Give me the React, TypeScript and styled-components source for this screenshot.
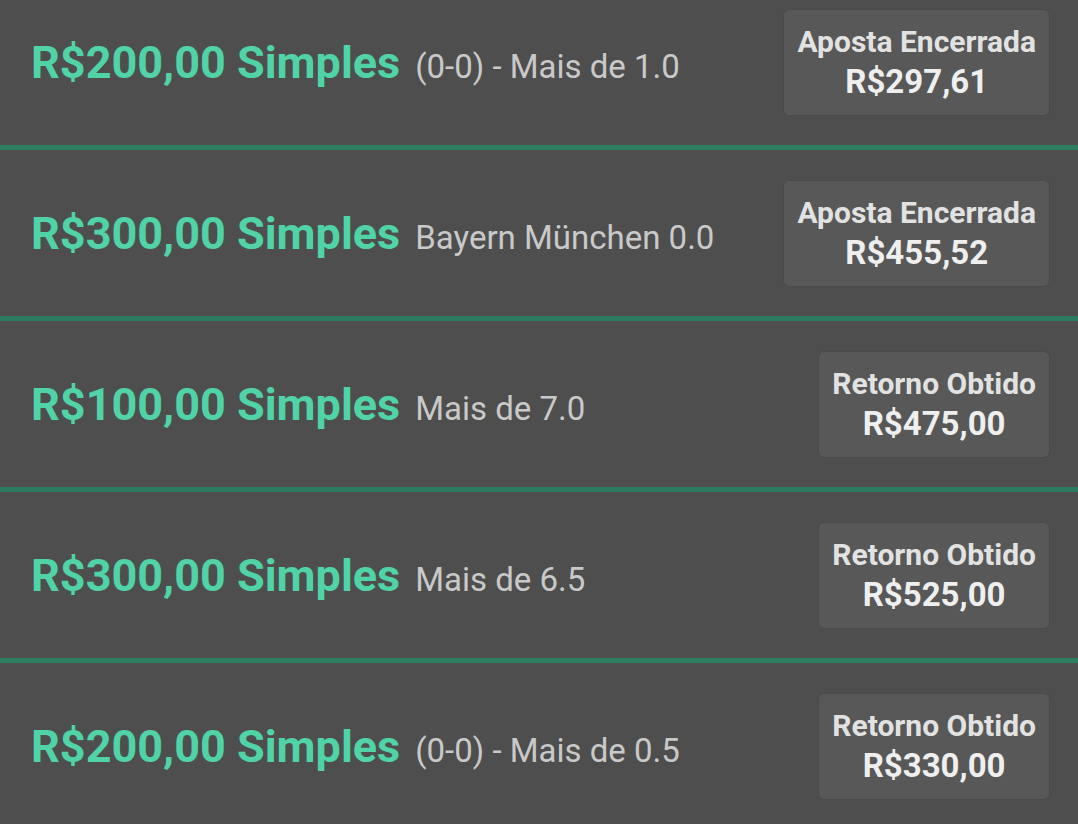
import React from "react";
import styled, { createGlobalStyle } from "styled-components";

const Global = createGlobalStyle`
  html, body { margin: 0; padding: 0; background: #4e4e4e; }
  body { font-family: Roboto, "Noto Sans", sans-serif; overflow: hidden; }
`;

const List = styled.div`
  display: flex;
  flex-direction: column;
  margin-top: -21px;
  background: #4e4e4e;
`;

const Row = styled.div`
  display: flex;
  align-items: center;
  justify-content: space-between;
  padding: 31px 29px 30px 31px;
  border-bottom: 5px solid #2f7d60;
`;

const Title = styled.div`
  display: flex;
  align-items: baseline;
  gap: 15px;
  white-space: nowrap;
`;

const Stake = styled.span`
  font-size: 45px;
  font-weight: 700;
  color: #4fd3a7;
`;

const Selection = styled.span`
  font-size: 33px;
  font-weight: 400;
  color: #c9c9c9;
`;

const Result = styled.div`
  display: flex;
  flex-direction: column;
  align-items: center;
  justify-content: center;
  height: 105px;
  box-sizing: border-box;
  padding: 0 13px;
  background: #585858;
  border-radius: 5px;
  box-shadow: 0 0 0 1px rgba(0, 0, 0, 0.04);
`;

const ResultLabel = styled.span`
  font-size: 30px;
  font-weight: 700;
  color: #e2e2e2;
  line-height: 38px;
`;

const ResultAmount = styled.span`
  font-size: 33px;
  font-weight: 700;
  color: #efefef;
  line-height: 42px;
`;

const bets = [
  { stake: "R$200,00 Simples", sel: "(0-0) - Mais de 1.0", label: "Aposta Encerrada", amount: "R$297,61" },
  { stake: "R$300,00 Simples", sel: "Bayern München 0.0", label: "Aposta Encerrada", amount: "R$455,52" },
  { stake: "R$100,00 Simples", sel: "Mais de 7.0", label: "Retorno Obtido", amount: "R$475,00" },
  { stake: "R$300,00 Simples", sel: "Mais de 6.5", label: "Retorno Obtido", amount: "R$525,00" },
  { stake: "R$200,00 Simples", sel: "(0-0) - Mais de 0.5", label: "Retorno Obtido", amount: "R$330,00" },
];

export default function App() {
  return (
    <>
      <Global />
      <List>
        {bets.map((b, i) => (
          <Row key={i}>
            <Title>
              <Stake>{b.stake}</Stake>
              <Selection>{b.sel}</Selection>
            </Title>
            <Result>
              <ResultLabel>{b.label}</ResultLabel>
              <ResultAmount>{b.amount}</ResultAmount>
            </Result>
          </Row>
        ))}
      </List>
    </>
  );
}
